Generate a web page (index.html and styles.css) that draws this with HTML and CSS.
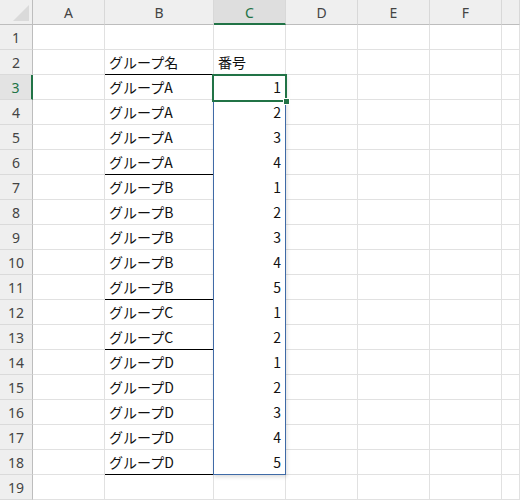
FILE: index.html
```html
<!DOCTYPE html>
<html lang="ja">
<head>
<meta charset="utf-8">
<link rel="stylesheet" href="styles.css">
</head>
<body>
<div class="wrap">
<div class="sheet">
  <div class="corner"><span class="tri"></span></div>
  <div class="ch">A</div><div class="ch">B</div><div class="ch sel">C</div><div class="ch">D</div><div class="ch">E</div><div class="ch">F</div><div class="ch"></div>

  <div class="rh">1</div><div class="c"></div><div class="c"></div><div class="c"></div><div class="c"></div><div class="c"></div><div class="c"></div><div class="c"></div>
  <div class="rh">2</div><div class="c"></div><div class="c t bk">グループ名</div><div class="c t">番号</div><div class="c"></div><div class="c"></div><div class="c"></div><div class="c"></div>
  <div class="rh sel">3</div><div class="c"></div><div class="c t">グループA</div><div class="c n">1</div><div class="c"></div><div class="c"></div><div class="c"></div><div class="c"></div>
  <div class="rh">4</div><div class="c"></div><div class="c t">グループA</div><div class="c n">2</div><div class="c"></div><div class="c"></div><div class="c"></div><div class="c"></div>
  <div class="rh">5</div><div class="c"></div><div class="c t">グループA</div><div class="c n">3</div><div class="c"></div><div class="c"></div><div class="c"></div><div class="c"></div>
  <div class="rh">6</div><div class="c"></div><div class="c t bk">グループA</div><div class="c n">4</div><div class="c"></div><div class="c"></div><div class="c"></div><div class="c"></div>
  <div class="rh">7</div><div class="c"></div><div class="c t">グループB</div><div class="c n">1</div><div class="c"></div><div class="c"></div><div class="c"></div><div class="c"></div>
  <div class="rh">8</div><div class="c"></div><div class="c t">グループB</div><div class="c n">2</div><div class="c"></div><div class="c"></div><div class="c"></div><div class="c"></div>
  <div class="rh">9</div><div class="c"></div><div class="c t">グループB</div><div class="c n">3</div><div class="c"></div><div class="c"></div><div class="c"></div><div class="c"></div>
  <div class="rh">10</div><div class="c"></div><div class="c t">グループB</div><div class="c n">4</div><div class="c"></div><div class="c"></div><div class="c"></div><div class="c"></div>
  <div class="rh">11</div><div class="c"></div><div class="c t bk">グループB</div><div class="c n">5</div><div class="c"></div><div class="c"></div><div class="c"></div><div class="c"></div>
  <div class="rh">12</div><div class="c"></div><div class="c t">グループC</div><div class="c n">1</div><div class="c"></div><div class="c"></div><div class="c"></div><div class="c"></div>
  <div class="rh">13</div><div class="c"></div><div class="c t bk">グループC</div><div class="c n">2</div><div class="c"></div><div class="c"></div><div class="c"></div><div class="c"></div>
  <div class="rh">14</div><div class="c"></div><div class="c t">グループD</div><div class="c n">1</div><div class="c"></div><div class="c"></div><div class="c"></div><div class="c"></div>
  <div class="rh">15</div><div class="c"></div><div class="c t">グループD</div><div class="c n">2</div><div class="c"></div><div class="c"></div><div class="c"></div><div class="c"></div>
  <div class="rh">16</div><div class="c"></div><div class="c t">グループD</div><div class="c n">3</div><div class="c"></div><div class="c"></div><div class="c"></div><div class="c"></div>
  <div class="rh">17</div><div class="c"></div><div class="c t">グループD</div><div class="c n">4</div><div class="c"></div><div class="c"></div><div class="c"></div><div class="c"></div>
  <div class="rh">18</div><div class="c"></div><div class="c t bk">グループD</div><div class="c n">5</div><div class="c"></div><div class="c"></div><div class="c"></div><div class="c"></div>
  <div class="rh">19</div><div class="c"></div><div class="c"></div><div class="c"></div><div class="c"></div><div class="c"></div><div class="c"></div><div class="c"></div>
</div>
<div class="overlay">
  <div class="range"></div>
  <div class="cursor"><span class="handle"></span></div>
</div>
</div>
</body>
</html>
```

FILE: styles.css
```css
* { box-sizing: border-box; }
html, body { margin: 0; padding: 0; background: #fff; overflow: hidden; }
body { width: 520px; height: 500px; }

.wrap { position: relative; }

.sheet, .overlay {
  display: grid;
  grid-template-columns: 33px 72px 109px 72px 72px 72px 72px 1fr;
  grid-template-rows: 25px;
  grid-auto-rows: 25px;
}
.sheet {
  font-family: "Noto Sans CJK JP", "Noto Sans", sans-serif;
  font-size: 14px;
  color: #111;
}
.overlay {
  position: absolute;
  inset: 0;
  pointer-events: none;
}

.corner {
  background: #efefef;
  border-right: 1px solid #bdbdbd;
  border-bottom: 1px solid #bdbdbd;
  position: relative;
}
.tri {
  position: absolute;
  right: 3px;
  bottom: 3px;
  width: 16px;
  height: 16px;
  background: #dadada;
  clip-path: polygon(100% 0, 100% 100%, 0 100%);
}

.ch {
  background: #efefef;
  border-right: 1px solid #d8d8d8;
  border-bottom: 1px solid #bdbdbd;
  color: #444;
  font-family: "Noto Sans", sans-serif;
  font-size: 14px;
  display: flex;
  align-items: center;
  justify-content: center;
  padding-top: 1px;
}
.ch.sel {
  background: #dedede;
  color: #217346;
  border-bottom: 2px solid #217346;
}

.rh {
  background: #efefef;
  border-right: 1px solid #bdbdbd;
  border-bottom: 1px solid #dadada;
  color: #444;
  font-family: "Noto Sans", sans-serif;
  font-size: 14px;
  display: flex;
  align-items: center;
  justify-content: center;
}
.rh.sel {
  background: #e3e3e3;
  color: #217346;
  border-right: 2px solid #217346;
}

.c {
  border-right: 1px solid #e1e1e1;
  border-bottom: 1px solid #e1e1e1;
  display: flex;
  align-items: center;
  white-space: nowrap;
  overflow: hidden;
}
.t { padding-left: 4px; }
.n {
  justify-content: flex-end;
  padding-right: 4px;
  border-bottom-color: #fff;
}
.bk { border-bottom-color: #000; }

.range {
  grid-column: 4;
  grid-row: 4 / 20;
  margin-left: -1px;
  margin-top: -1px;
  border: 1px solid #3f6aa6;
  box-shadow: 1px 2px 4px rgba(0, 0, 0, 0.14);
}

.cursor {
  grid-column: 4;
  grid-row: 4;
  margin: -1px -1px -2px -2px;
  border: 2px solid #217346;
  position: relative;
}
.handle {
  position: absolute;
  right: -5px;
  bottom: -5px;
  width: 7px;
  height: 7px;
  background: #217346;
  border: 1px solid #fff;
}
```
